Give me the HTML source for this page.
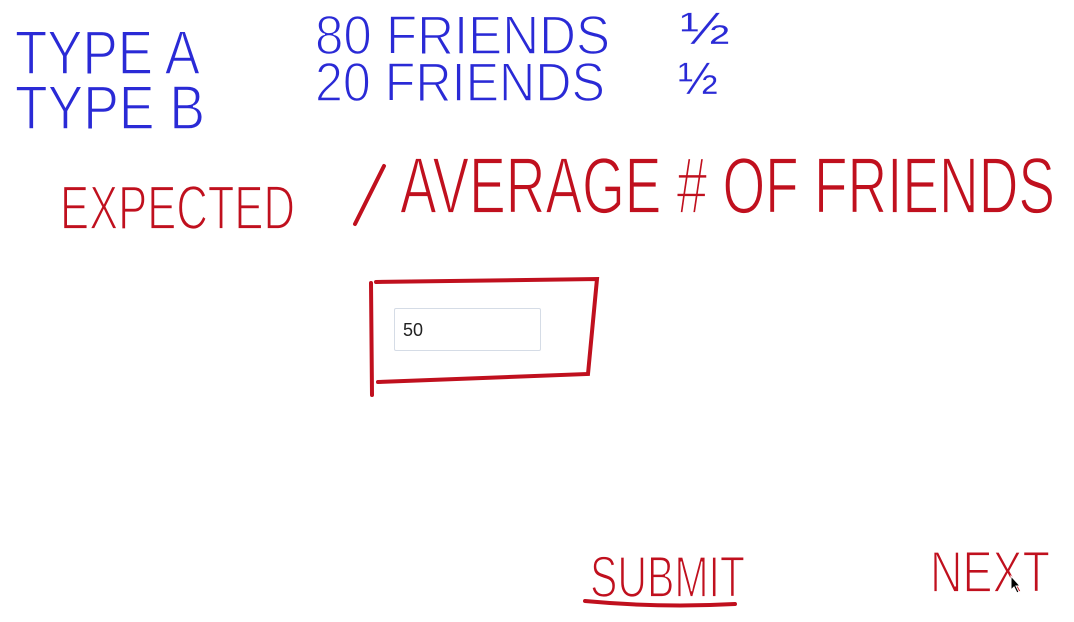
<!DOCTYPE html>
<html><head><meta charset="utf-8"><style>
html,body{margin:0;padding:0;background:#fff;width:1074px;height:622px;overflow:hidden}
svg{position:absolute;left:0;top:0}
text{font-family:"Liberation Sans",sans-serif;stroke:#fff}
.b{fill:#2a2ad6}
.r{fill:#c0101e}
.inp{position:absolute;left:394px;top:308px;width:147px;height:43px;border:1px solid #d5dce6;border-radius:2px;box-sizing:border-box;font-family:"Liberation Sans",sans-serif;font-size:18px;color:#222;padding:11px 0 0 8px}
</style></head><body>
<svg width="1074" height="622" viewBox="0 0 1074 622">
<g class="b" font-size="62" stroke-width="1.5">
<text x="15" y="74" textLength="185" lengthAdjust="spacingAndGlyphs">TYPE A</text>
<text x="15" y="129" textLength="190" lengthAdjust="spacingAndGlyphs">TYPE B</text>
<text x="315" y="54" textLength="295" lengthAdjust="spacingAndGlyphs" font-size="55">80 FRIENDS</text>
<text x="315" y="101" textLength="290" lengthAdjust="spacingAndGlyphs" font-size="55">20 FRIENDS</text>
</g>
<g class="b" stroke-width="0.3">
<text x="680" y="44" textLength="50" lengthAdjust="spacingAndGlyphs" font-size="45">½</text>
<text x="678" y="94" textLength="40" lengthAdjust="spacingAndGlyphs" font-size="45">½</text>
</g>
<g class="r" stroke-width="1.8">
<text x="60" y="229" textLength="235" lengthAdjust="spacingAndGlyphs" font-size="62">EXPECTED</text>
<text x="400" y="213" textLength="655" lengthAdjust="spacingAndGlyphs" font-size="80">AVERAGE # OF FRIENDS</text>
<text x="590" y="597" textLength="155" lengthAdjust="spacingAndGlyphs" font-size="58">SUBMIT</text>
<text x="930" y="592" textLength="120" lengthAdjust="spacingAndGlyphs" font-size="58">NEXT</text>
</g>
<g fill="none" stroke="#c0101e" stroke-width="4" stroke-linecap="round">
<path d="M384 166 L355 224"/>
<path d="M371 283 L372 395"/>
<path d="M376 282 L597 279 L588 374 L378 382"/>
<path d="M585 601 Q660 608 735 604"/>
</g>
<path d="M1011 576 l0 14 l3 -3 l3 6 l2 -1 l-3 -6 l4 0 z" fill="#000" stroke="#fff" stroke-width="1"/>
</svg>
<div class="inp">50</div>
</body></html>
